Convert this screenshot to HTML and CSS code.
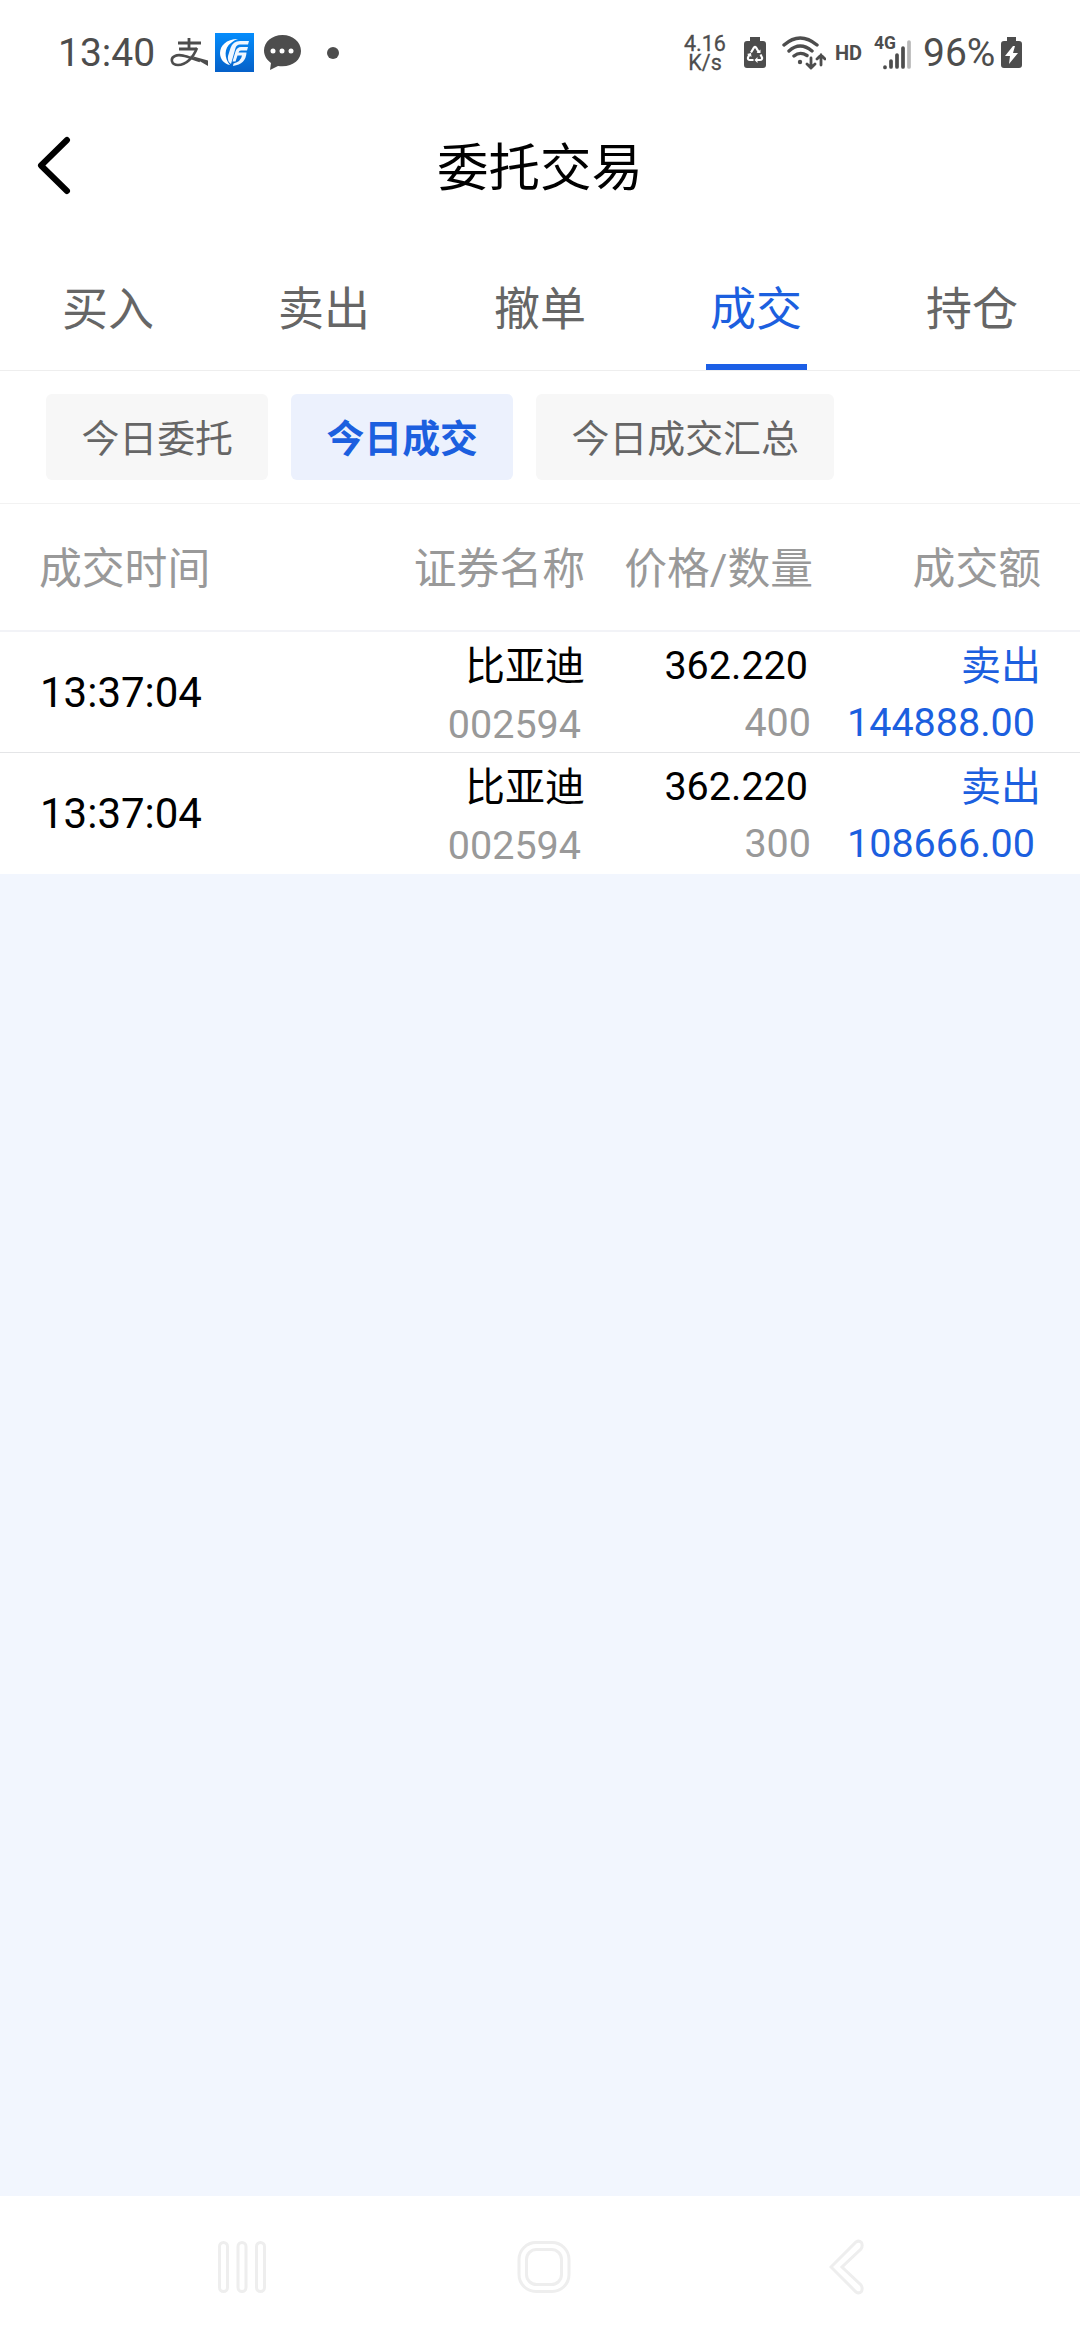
FILE: index.html
```html
<!DOCTYPE html>
<html lang="zh-CN">
<head>
<meta charset="utf-8">
<title>委托交易</title>
<link rel="stylesheet" href="styles.css">
</head>
<body>
<header class="status">
  <span class="clock">13:40</span>
  <svg class="ic-pay" width="38" height="30" viewBox="0 0 38 30" fill="none" stroke="#4d4d4d"><path d="M8 5H31M19 0V11M9 11H27" stroke-width="2.800"/><path d="M27 10C23 20 16 27 8 27C1 27 0 20 5 18C11 15 20 20 30 23" stroke-width="2.600"/><path fill="#4d4d4d" stroke="none" d="M20 17.500L38 22.500V28Z"/></svg>
  <svg class="ic-gf" width="39" height="39" viewBox="0 0 39 39"><defs><linearGradient id="g" x2="0" y2="1"><stop stop-color="#058dfc"/><stop offset="1" stop-color="#0560c8"/></linearGradient></defs><path fill="url(#g)" d="M0 0H39V39H0Z"/><path fill="#fff" d="M23 6C11 6 5 13 5 20C5 26 9 31 15 32C9 25 9 15 16 10Q19 7 23 6Z"/><path fill="#eef6ff" d="M34 8L33 11.500H25Q21.500 11.500 20.500 15L16 31Q12 28 13 23L15.500 15Q18 8 25 8ZM33 14L32 17.500H26Q24 17.500 23.500 19.500H31.500Q31 31 18 33L18.500 30.500Q26 28.500 27 22.500H22.500L20.500 28.500H17.500L20.500 18.500Q22 14 26 14Z"/></svg>
  <svg class="ic-chat" width="37" height="36" viewBox="0 0 37 36"><path fill="#4d4d4d" d="M18.500 0C8 0 0 7 0 15.500C0 21 3 25 7 28L6 35L14 31C28 33 37 25 37 16C37 7 29 0 18.500 0Z"/><g fill="#fff"><circle cx="9" cy="16" r="2.500"/><circle cx="18" cy="16" r="2.500"/><circle cx="27" cy="16" r="2.500"/></g></svg>
  <span class="dot"></span>
  <span class="speed"><span>4.16</span><span>K/s</span></span>
  <svg class="ic-saver" width="22" height="32" viewBox="0 0 22 32"><path fill="#4d4d4d" d="M6 0H16V4H19Q22 4 22 7V28Q22 31 19 31H3Q0 31 0 28V7Q0 4 3 4H6Z"/><path d="M7 15.500L10 10.500Q11 9.500 12 10.500L15 15.500M16.500 17.500L18 20.500Q18.500 23 16 23H12.500M9.500 23H6Q3.500 23 4 20.500L5.500 17.500" fill="none" stroke="#fff" stroke-width="2.200"/><path d="M12.500 16H16.500V12.500ZM13.500 20V26L10.500 23ZM3 17L7 16L7.500 20Z" fill="#fff"/></svg>
  <svg class="ic-wifi" width="44" height="34" viewBox="0 0 44 34" fill="none" stroke="#4d4d4d" stroke-width="3.400" stroke-linecap="round"><path d="M2 9Q18-5 35 9M7 15Q18 5 30 15M12 20Q18 15 25 19.500"/><circle cx="18" cy="26" r="2.200" fill="#4d4d4d" stroke="none"/><path d="M29 22V32M25 28L29 32L33 28M39 29V19M35 23L39 19L43 23" stroke-width="2.800"/></svg>
  <span class="hd">HD</span>
  <svg class="ic-signal" width="38" height="34" viewBox="0 0 38 34"><text class="g4" x="0" y="13">4G</text><g stroke="#4d4d4d" stroke-width="3.700" stroke-linecap="round"><path d="M11 31V31.500M17 25V31M23 19V31M29 12V31"/><path stroke="#b8b8b8" d="M35 6V31"/></g></svg>
  <span class="pct">96%</span>
  <svg class="ic-batt" width="21" height="32" viewBox="0 0 21 32"><path fill="#4d4d4d" d="M6 0H15V4H18Q21 4 21 7V28Q21 31 18 31H3Q0 31 0 28V7Q0 4 3 4H6Z"/><path fill="#fff" d="M12 9L4 19H9L8 27L17 16H12L14 9Z"/></svg>
</header>
<div class="titlebar">
  <svg class="back" width="36" height="60" viewBox="0 0 36 60"><path d="M31 4L5 29.500L31 55" fill="none" stroke="#000" stroke-width="6" stroke-linecap="round" stroke-linejoin="round"/></svg>
  <h1>委托交易</h1>
</div>
<nav class="tabs">
  <a>买入</a><a>卖出</a><a>撤单</a><a class="on">成交</a><a>持仓</a>
</nav>
<div class="chips">
  <a>今日委托</a><a class="on">今日成交</a><a>今日成交汇总</a>
</div>
<div class="row head"><span>成交时间</span><span>证券名称</span><span>价格/数量</span><span>成交额</span></div>
<div class="row">
  <span class="time">13:37:04</span>
  <div class="cell stock"><b>比亚迪</b><i>002594</i></div>
  <div class="cell price"><b>362.220</b><i>400</i></div>
  <div class="cell sum"><b>卖出</b><i>144888.00</i></div>
</div>
<div class="row last">
  <span class="time">13:37:04</span>
  <div class="cell stock"><b>比亚迪</b><i>002594</i></div>
  <div class="cell price"><b>362.220</b><i>300</i></div>
  <div class="cell sum"><b>卖出</b><i>108666.00</i></div>
</div>
<main class="empty"></main>
<footer class="sysnav">
  <svg width="48" height="54" viewBox="0 0 48 54"><rect x="1.500" y="2.500" width="8" height="49" rx="4"/><rect x="20" y="2.500" width="8" height="49" rx="4"/><rect x="38.500" y="2.500" width="8" height="49" rx="4"/></svg>
  <svg width="54" height="54" viewBox="0 0 54 54"><rect x="2" y="2.500" width="50" height="49" rx="17"/><rect x="9.500" y="9.500" width="35" height="35" rx="10"/></svg>
  <svg width="36" height="56" viewBox="0 0 36 56"><path d="M2 28L27 3Q30 1 32.500 3.500Q34 7 32 10L13 28L32 46Q34 49 32.500 52.500Q30 55 27 53Z"/></svg>
</footer>
</body>
</html>
```
FILE: styles.css
```css
* { box-sizing: border-box; }
body { margin: 0; width: 1080px; height: 2340px; display: flex; flex-direction: column; background: #fff; color: #000; font-family: Roboto, "Noto Sans CJK SC", sans-serif; overflow: hidden; }
svg { display: block; flex: none; }
.status { height: 105px; flex: none; display: flex; align-items: center; padding-left: 58px; color: #4d4d4d; white-space: nowrap; }
.clock { width: 112px; font-size: 39px; }
.ic-gf { margin-left: 7px; }
.ic-chat { margin-left: 10px; }
.dot { width: 12px; height: 12px; border-radius: 6px; background: #4d4d4d; margin-left: 26px; }
.speed { width: 42px; margin-left: 345px; font-size: 21.500px; line-height: 19px; display: flex; flex-direction: column; align-items: center; -webkit-text-stroke: 0.300px #4d4d4d; }
.ic-saver { margin-left: 18px; }
.ic-wifi { margin-left: 16px; }
.hd { width: 26px; margin-left: 9px; font-size: 20px; font-weight: 700; }
.ic-signal { margin-left: 13px; overflow: visible; }
.g4 { font-size: 17.500px; font-weight: 700; fill: #4d4d4d; }
.pct { width: 72px; margin-left: 11px; font-size: 39px; }
.ic-batt { margin-left: 6px; }
.titlebar { height: 124px; flex: none; display: grid; grid-template-columns: 36px 1fr 36px; align-items: center; padding: 0 36px; }
.back { margin-top: -3px; }
.titlebar h1 { margin: 0; padding-top: 3px; font-size: 51.500px; font-weight: 400; text-align: center; line-height: 76px; }
.tabs { height: 142px; flex: none; display: grid; grid-template-columns: repeat(5, 1fr); border-bottom: 1px solid #eee; justify-items: center; }
.tabs a { width: 101px; font-size: 46px; line-height: 68px; padding-top: 46px; text-align: center; color: #666; }
.tabs .on { color: #1c5fdf; border-bottom: 6px solid #1c5fe6; }
.chips { height: 133px; flex: none; display: flex; gap: 22.700px; padding: 23px 46px; border-bottom: 1px solid #f2f2f2; }
.chips a { height: 86px; padding: 1px 35.400px 0; line-height: 89px; font-size: 37.900px; color: #666; background: #f7f7f7; border-radius: 6px; }
.chips .on { background: #ecf1fd; color: #1c5fdf; font-weight: 700; }
.row { height: 121px; flex: none; display: grid; grid-template-columns: 344px 200px 228px 228px; padding-left: 40px; border-bottom: 1px solid #e4e5e7; }
.head { height: 128px; border-bottom: 2px solid #f2f3f7; padding-left: 39px; grid-template-columns: 346px 200px 228px 228px; font-size: 42.800px; line-height: 130px; color: #999; text-align: right; white-space: nowrap; }
.head span:first-child { text-align: left; }
.last { border-bottom: 0; }
.time { font-size: 42px; line-height: 122px; }
.cell { display: flex; flex-direction: column; align-items: flex-end; padding-top: 5px; font-size: 39.500px; }
.cell b, .cell i { font-weight: 400; font-style: normal; line-height: 58px; height: 58px; }
.cell i { color: #999; }
.stock b, .sum b { font-size: 40px; line-height: 59px; margin-right: -1px; }
.stock i { padding: 1px 3px 0 0; }
.price b { padding-right: 4px; }
.price i { padding-right: 1px; margin-top: -1px; }
.sum b, .sum i { color: #1c5fdf; }
.sum i { padding-right: 5px; margin-top: -1px; }
.empty { flex: 1; background: #f2f6fe; }
.sysnav { height: 144px; flex: none; display: grid; grid-template-columns: 299px 312px 36px; align-items: center; padding: 0 0 2px 218px; fill: none; stroke: #eee; stroke-width: 3; }
```
